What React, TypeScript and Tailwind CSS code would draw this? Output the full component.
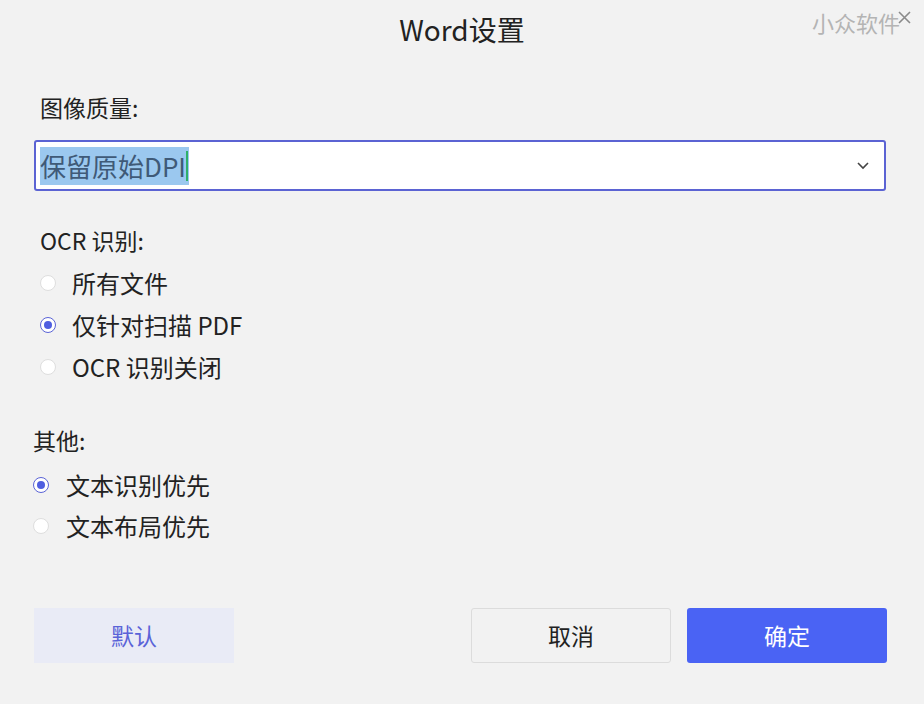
import React from "react";

const font = { fontFamily: '"Noto Sans CJK SC", "Noto Sans", sans-serif' };

const Radio = ({ checked }: { checked?: boolean }) => (
  <span
    className={
      "flex items-center justify-center w-[16px] h-[16px] rounded-full bg-white shrink-0 " +
      (checked ? "border-[1.5px] border-[#5a63d6]" : "border border-[#dedede]")
    }
  >
    {checked && <span className="w-[8px] h-[8px] rounded-full bg-[#4f5ee0]" />}
  </span>
);

const Option = ({ label, checked }: { label: string; checked?: boolean }) => (
  <div className="flex items-center h-[42px] pl-[40px] gap-[16px]">
    <Radio checked={checked} />
    <span className="text-[24px] text-[#222]">{label}</span>
  </div>
);

const App = () => {
  return (
    <div className="relative w-[924px] h-[704px] bg-[#f2f2f2] flex flex-col" style={font}>
      <div className="h-[58px] flex items-center justify-center">
        <h1 className="text-[28px] text-[#222] leading-none">Word设置</h1>
      </div>
      <div className="absolute top-[7px] right-[24px] text-[22px] text-[#b4b4b4] leading-[30px]">小众软件</div>
      <svg className="absolute top-[10px] right-[12px]" width="15" height="15" viewBox="0 0 15 15">
        <path d="M2 2 L13 13 M13 2 L2 13" stroke="#8a8a8a" strokeWidth="1.6" />
      </svg>

      <div className="mt-[34px] pl-[40px] text-[23px] leading-[30px] text-[#222]">图像质量:</div>
      <div className="mt-[18px] mx-[34px] w-[852px] h-[51px] bg-white border-2 border-[#5b63d3] rounded-[3px] flex items-center justify-between pl-[4px] pr-[14px]">
        <div className="flex items-center h-[38px] bg-[#9bc8ef] pr-[1px]">
          <span className="text-[26px] text-[#3f5a78] leading-none">保留原始DPI</span>
          <span className="w-[2px] h-[30px] bg-[#2fb06a]" />
        </div>
        <svg width="14" height="9" viewBox="0 0 14 9">
          <path d="M2 2 L7 7 L12 2" fill="none" stroke="#444" strokeWidth="1.6" />
        </svg>
      </div>

      <div className="mt-[34px] pl-[40px] text-[23px] leading-[30px] text-[#222]">OCR 识别:</div>
      <div className="mt-[7px] flex flex-col">
        <Option label="所有文件" />
        <Option label="仅针对扫描 PDF" checked />
        <Option label="OCR 识别关闭" />
      </div>

      <div className="mt-[37px] pl-[33px] text-[23px] leading-[30px] text-[#222]">其他:</div>
      <div className="mt-[9px] flex flex-col">
        <div className="flex items-center h-[41px] pl-[33px] gap-[17px]">
          <Radio checked />
          <span className="text-[24px] text-[#222]">文本识别优先</span>
        </div>
        <div className="flex items-center h-[41px] pl-[33px] gap-[17px]">
          <Radio />
          <span className="text-[24px] text-[#222]">文本布局优先</span>
        </div>
      </div>

      <div className="mt-[62px] flex items-center pl-[34px] pr-[37px]">
        <button className="w-[200px] h-[55px] bg-[#e9ebf6] text-[#5a63d8] text-[23px]">默认</button>
        <div className="flex-1" />
        <button className="w-[200px] h-[55px] bg-[#f2f2f2] border border-[#dcdcdc] rounded-[3px] text-[#222] text-[23px]">取消</button>
        <button className="ml-[16px] w-[200px] h-[55px] bg-[#4a63f4] rounded-[3px] text-white text-[23px]">确定</button>
      </div>
    </div>
  );
};

export default App;
